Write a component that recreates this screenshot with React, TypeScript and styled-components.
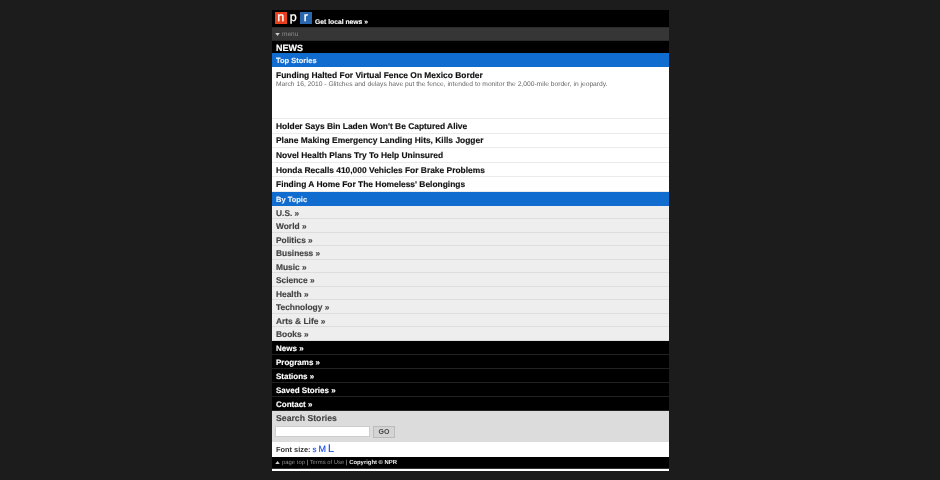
import styled, { createGlobalStyle } from 'styled-components';

const stories = [
  'Holder Says Bin Laden Won\'t Be Captured Alive',
  'Plane Making Emergency Landing Hits, Kills Jogger',
  'Novel Health Plans Try To Help Uninsured',
  'Honda Recalls 410,000 Vehicles For Brake Problems',
  'Finding A Home For The Homeless\' Belongings',
];
const topics = ['U.S.', 'World', 'Politics', 'Business', 'Music', 'Science', 'Health', 'Technology', 'Arts & Life', 'Books'];
const sections = ['News', 'Programs', 'Stations', 'Saved Stories', 'Contact'];

export default function App() {
  return (
    <>
      <GlobalStyle />
      <Page>
        <Header>
          <Logo>
            <LogoTile $bg="#e8401c">n</LogoTile>
            <LogoTile $bg="#000">p</LogoTile>
            <LogoTile $bg="#2a66ae">r</LogoTile>
          </Logo>
          <LocalLink>Get local news »</LocalLink>
        </Header>
        <MenuBar>
          <Arrow width="5" height="3" viewBox="0 0 6 4"><polygon points="0,0 6,0 3,4" fill="#ccc" /></Arrow>
          menu
        </MenuBar>
        <PageTitle>NEWS</PageTitle>
        <SectionBar>Top Stories</SectionBar>
        <LeadStory>
          <StoryTitle>Funding Halted For Virtual Fence On Mexico Border</StoryTitle>
          <Teaser>March 16, 2010 - Glitches and delays have put the fence, intended to monitor the 2,000-mile border, in jeopardy.</Teaser>
        </LeadStory>
        {stories.map((s) => (
          <StoryRow key={s}><StoryTitle>{s}</StoryTitle></StoryRow>
        ))}
        <SectionBar>By Topic</SectionBar>
        {topics.map((t) => (
          <TopicRow key={t}>{t} »</TopicRow>
        ))}
        {sections.map((s) => (
          <NavRow key={s}>{s} »</NavRow>
        ))}
        <SearchBox>
          <SearchTitle>Search Stories</SearchTitle>
          <SearchForm>
            <SearchInput type="text" />
            <GoButton>GO</GoButton>
          </SearchForm>
        </SearchBox>
        <FontSizeRow>
          Font size:
          <SizeLink $size={8}>s</SizeLink>
          <SizeLink $size={9}>M</SizeLink>
          <SizeLink $size={11}>L</SizeLink>
        </FontSizeRow>
        <Footer>
          <Arrow width="5" height="3" viewBox="0 0 6 4"><polygon points="0,4 6,4 3,0" fill="#ccc" /></Arrow>
          <FooterText>page top <Sep>|</Sep> Terms of Use <Sep>|</Sep> <Copy>Copyright © NPR</Copy></FooterText>
        </Footer>
        <BottomEdge />
      </Page>
    </>
  );
}

const GlobalStyle = createGlobalStyle`
  html, body {
    margin: 0;
    height: 480px;
    overflow: hidden;
    background: #1c1c1c;
    font-family: "Liberation Sans", Arial, sans-serif;
    text-rendering: geometricPrecision;
  }
`;

const Page = styled.div`
  width: 397px;
  margin: 10px 0 0 272px;
  display: flex;
  flex-direction: column;
  filter: blur(0.2px);
`;

const Header = styled.div`
  height: 17px;
  background: #000;
  display: flex;
  align-items: flex-start;
  padding: 2px 0 0 3px;
  box-sizing: border-box;
`;

const Logo = styled.div`
  display: flex;
  gap: 1px;
  height: 12px;
`;

const LogoTile = styled.span<{ $bg: string }>`
  width: 11.5px;
  height: 12px;
  background: ${({ $bg }) => $bg};
  color: #fff;
  font-size: 12.5px;
  line-height: 11px;
  text-align: center;
  -webkit-text-stroke: 0.3px #fff;
`;

const LocalLink = styled.span`
  margin: 6px 0 0 3.5px;
  color: #fff;
  font-size: 6.75px;
  font-weight: bold;
  line-height: 9px;
  -webkit-text-stroke: 0.12px #fff;
`;

const MenuBar = styled.div`
  height: 14px;
  background: #363636;
  border-top: 1px solid #2a2a2a;
  border-bottom: 1px solid #2a2a2a;
  box-sizing: border-box;
  color: #8c8c8c;
  font-size: 6.5px;
  display: flex;
  align-items: center;
  gap: 2px;
  padding-left: 3px;
`;

const Arrow = styled.svg`
  flex: none;
  margin-top: 1px;
`;

const PageTitle = styled.div`
  height: 12px;
  box-sizing: border-box;
  padding: 1px 0 0 4px;
  background: #000;
  color: #fff;
  font-size: 9px;
  font-weight: bold;
  line-height: 12px;
  -webkit-text-stroke: 0.15px #fff;
`;

const SectionBar = styled.div`
  height: 14px;
  box-sizing: border-box;
  background: #116ccf;
  color: #eef4fb;
  font-size: 7.5px;
  font-weight: bold;
  line-height: 14px;
  padding: 1px 0 0 4px;
  -webkit-text-stroke: 0.12px #eef4fb;
`;

const LeadStory = styled.div`
  height: 52px;
  box-sizing: border-box;
  background: #fff;
  border-bottom: 1px solid #ebebeb;
  padding: 3px 4px 0;
`;

const StoryTitle = styled.div`
  color: #111;
  font-size: 8.42px;
  font-weight: bold;
  line-height: 10px;
  -webkit-text-stroke: 0.15px #111;
`;

const Teaser = styled.div`
  color: #666;
  font-size: 6.7px;
  line-height: 8px;
  margin-top: 1px;
`;

const StoryRow = styled.div`
  height: 14.6px;
  box-sizing: border-box;
  background: #fff;
  border-bottom: 1px solid #ebebeb;
  padding-left: 4px;
  display: flex;
  align-items: center;
`;

const TopicRow = styled.div`
  height: 13.5px;
  box-sizing: border-box;
  background: #eee;
  border-bottom: 1px solid #ddd;
  color: #444;
  font-size: 8.4px;
  font-weight: bold;
  line-height: 13px;
  padding: 1px 0 0 4px;
  -webkit-text-stroke: 0.15px #444;
`;

const NavRow = styled.div`
  height: 14px;
  box-sizing: border-box;
  background: #000;
  border-bottom: 1px solid #222;
  color: #fff;
  font-size: 8px;
  font-weight: bold;
  line-height: 13px;
  padding: 1px 0 0 4px;
  -webkit-text-stroke: 0.15px #fff;
`;

const SearchBox = styled.div`
  height: 31px;
  box-sizing: border-box;
  background: #dcdcdc;
  padding: 2px 4px 0;
`;

const SearchTitle = styled.div`
  color: #444;
  font-size: 8.7px;
  font-weight: bold;
  line-height: 11px;
  -webkit-text-stroke: 0.12px #444;
`;

const SearchForm = styled.div`
  display: flex;
  align-items: center;
  gap: 3px;
  margin: 2px 0 0 -1px;
`;

const SearchInput = styled.input`
  width: 95px;
  height: 11px;
  box-sizing: border-box;
  margin: 0;
  padding: 0;
  border: 1px solid #ccc;
  background: #fff;
`;

const GoButton = styled.button`
  width: 22px;
  height: 12px;
  box-sizing: border-box;
  margin: 0;
  padding: 0;
  border: 1px solid #bbb;
  background: #d4d4d4;
  color: #444;
  font-family: inherit;
  font-size: 7px;
  font-weight: bold;
  line-height: 10px;
`;

const FontSizeRow = styled.div`
  height: 15px;
  background: #fff;
  color: #333;
  font-size: 7.4px;
  font-weight: bold;
  padding-left: 4px;
  display: flex;
  align-items: center;
  gap: 2px;
`;

const SizeLink = styled.span<{ $size: number }>`
  color: #1a4fe8;
  font-size: ${({ $size }) => $size}px;
  font-weight: normal;
  -webkit-text-stroke: 0.15px #1a4fe8;
`;

const Footer = styled.div`
  height: 11px;
  background: #000;
  border-bottom: 1px solid #333;
  color: #8a8a8a;
  font-size: 5.9px;
  line-height: 11px;
  padding-left: 3px;
  display: flex;
  align-items: center;
  gap: 2px;
`;

const FooterText = styled.span`
  white-space: pre;
  margin-top: 3px;
`;

const Sep = styled.span`
  color: #ccc;
`;

const Copy = styled.span`
  color: #eee;
  font-weight: bold;
`;

const BottomEdge = styled.div`
  height: 2px;
  background: #fff;
`;
